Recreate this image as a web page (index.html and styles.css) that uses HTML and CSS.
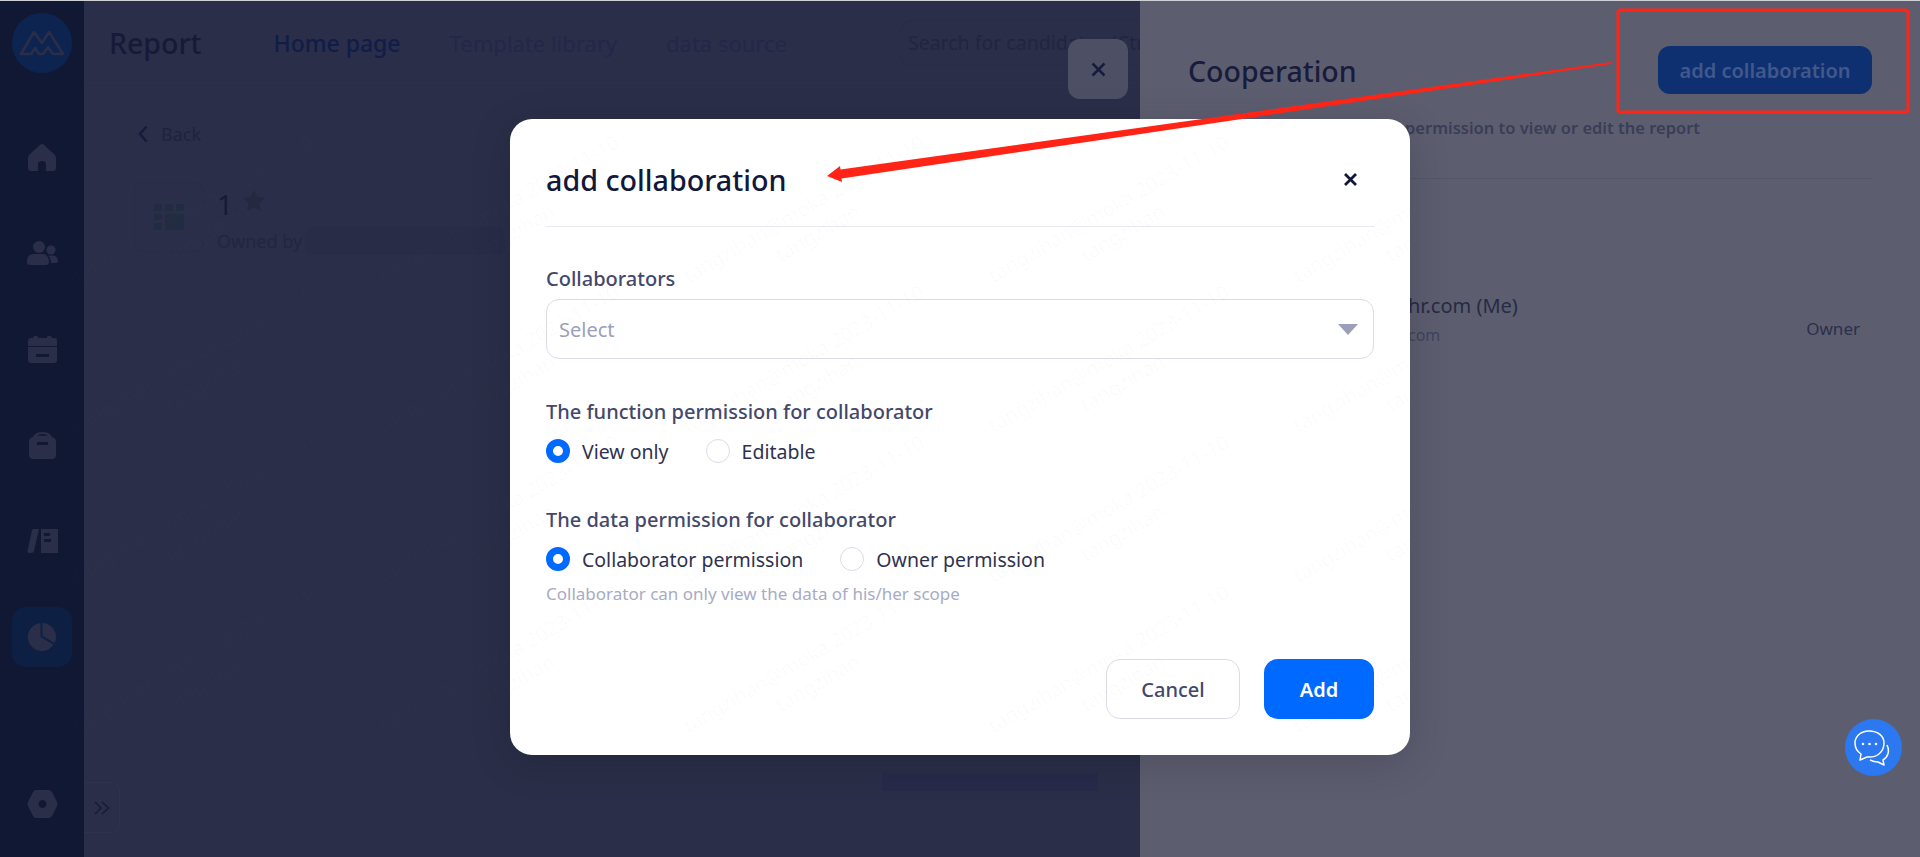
FILE: index.html
```html
<!DOCTYPE html>
<html lang="en">

<head>
    <meta charset="UTF-8">
    <title>Report - Cooperation</title>

    <link rel="stylesheet" href="styles.css">
</head>

<body>
<div class="app">
    <nav class="nav">
        <div class="nav-logo">
            <svg width="46" height="28" viewBox="0 0 46 28" fill="none" stroke="#2a2e49" stroke-width="2.500" stroke-linejoin="round">
                <path d="M2 25 L15 3 L23 14 L30 3 L44 25 H34 L29 18 L24 25 H20 L16 19 L12 25 Z"/>
            </svg>
        </div>
        <a class="nav-item">
            <svg width="28" height="27" viewBox="0 0 28 27"><path d="M14 0 Q15 0 16 1 L26 10 Q28 12 28 14 V24 Q28 27 25 27 H18 V21 Q18 17 14 17 Q10 17 10 21 V27 H3 Q0 27 0 24 V14 Q0 12 2 10 L12 1 Q13 0 14 0 Z"/></svg>
        </a>
        <a class="nav-item">
            <svg width="31" height="24" viewBox="0 0 31 24"><circle cx="12" cy="6" r="6"/><path d="M0 20 Q0 13 7 13 H16 Q21 13 22 20 V21 Q22 24 19 24 H3 Q0 24 0 21 Z"/><circle cx="24" cy="9" r="4.5"/><path d="M21 14.500 H26 Q31 15 31 20 Q31 22 29 22 H24 Q24 17 21 14.500 Z"/></svg>
        </a>
        <a class="nav-item">
            <svg width="29" height="27" viewBox="0 0 29 27"><path d="M7 0 a2 2 0 0 1 3 2 H19 a2 2 0 0 1 3-2 a2 2 0 0 1 2 2 H26 Q29 2 29 5 V10 H0 V5 Q0 2 3 2 H5 a2 2 0 0 1 2-2 Z"/><path fill-rule="evenodd" d="M0 11 H29 V24 Q29 27 26 27 H3 Q0 27 0 24 Z M8 18 V21 H21 V18 Z"/></svg>
        </a>
        <a class="nav-item">
            <svg width="27" height="27" viewBox="0 0 27 27"><path fill-rule="evenodd" d="M4 5 Q6 0 13.500 0 Q21 0 23 5 Q27 6 27 10 V23 Q27 27 23 27 H4 Q0 27 0 23 V10 Q0 6 4 5 Z M8 3.800 Q10 2 13.500 2 Q17 2 19 3.800 Z M8 10 V13 H19 V10 Z"/></svg>
        </a>
        <a class="nav-item">
            <svg width="31" height="24" viewBox="0 0 31 24"><path d="M5 1 Q5.500 0 7 0 H12 L7 22 Q6.500 24 4 24 H2 Q0 24 0.500 22 Z"/><path fill-rule="evenodd" d="M14 0 H31 V24 H14 Z M17 4 V7 H23 V4 Z M17 10 V13 H24 V10 Z"/></svg>
        </a>
        <a class="nav-item nav-item-active">
            <svg width="28" height="28" viewBox="0 0 28 28"><path d="M12.500 0.100 A14 14 0 1 0 25.500 21.800 L12.500 13.800 Z"/><path d="M14.500 0.100 A14 14 0 0 1 28 14 Q28 17 26.600 20 L14.500 12.800 Z"/></svg>
        </a>
        <a class="nav-item nav-item-settings">
            <svg width="31" height="28" viewBox="0 0 31 28"><path fill-rule="evenodd" d="M9 0 H22 Q24 0 25 2 L30 12 Q31 14 30 16 L25 26 Q24 28 22 28 H9 Q7 28 6 26 L1 16 Q0 14 1 12 L6 2 Q7 0 9 0 Z M15.500 10 a4 4 0 1 0 0.010 0 Z"/></svg>
        </a>
    </nav>

    <main class="main">
        <header class="main-header">
            <h1 class="main-title">Report</h1>
            <span class="main-sep"></span>
            <a class="tab tab-active">Home page</a>
            <a class="tab">Template library</a>
            <a class="tab">data source</a>
            <div class="search">Search for candidates (Ctrl+K)</div>
        </header>
        <div class="main-body">
            <a class="back">
                <svg width="10" height="18" viewBox="0 0 10 18" fill="none" stroke="#161b3c" stroke-width="2.500"><path d="M8.500 1.500 L2 9 L8.500 16.500"/></svg>
                Back
            </a>
            <div class="report-row">
                <div class="report-thumb">
                    <svg width="30" height="26" viewBox="0 0 30 26" fill="#212c40">
                        <rect x="0" y="0" width="8" height="7"/><rect x="11" y="0" width="8" height="7" rx="1"/><rect x="22" y="0" width="8" height="7" rx="1"/>
                        <rect x="0" y="10" width="8" height="6" rx="1"/><rect x="11" y="10" width="19" height="16"/><rect x="0" y="19" width="8" height="7" rx="1"/>
                    </svg>
                </div>
                <div class="report-info">
                    <div class="report-name">
                        1
                        <svg class="report-star" width="22" height="21" viewBox="0 0 22 21" fill="#252940"><path d="M11 0 L14.400 6.800 L22 8 L16.500 13.300 L17.800 21 L11 17.400 L4.200 21 L5.500 13.300 L0 8 L7.600 6.800 Z"/></svg>
                    </div>
                    <div class="report-owner">Owned by <span class="redacted"></span></div>
                </div>
            </div>
        </div>
        <div class="main-footer"><span class="redacted-bar"></span></div>
        <a class="collapse">
            <svg width="16" height="14" viewBox="0 0 16 14" fill="none" stroke="#161b3c" stroke-width="1.500"><path d="M1 1 L7 7 L1 13 M8 1 L14.500 7 L8 13"/></svg>
        </a>
    </main>

    <aside class="panel">
        <a class="panel-close">
            <svg width="15" height="15" viewBox="0 0 15 15" fill="none" stroke="#181c3c" stroke-width="2.500"><path d="M1.500 1.500 L13.500 13.500 M13.500 1.500 L1.500 13.500"/></svg>
        </a>
        <div class="panel-head">
            <h2 class="panel-title">Cooperation</h2>
            <a class="panel-add">add collaboration</a>
        </div>
        <p class="panel-desc">permission to view or edit the report</p>
        <div class="member">
            <div class="member-info">
                <div class="member-name">hr.com (Me)</div>
                <div class="member-mail">com</div>
            </div>
            <div class="member-role">Owner</div>
        </div>
    </aside>
</div>

<a class="chat">
    <svg width="42" height="40" viewBox="0 0 42 40" fill="none" stroke="#fff" stroke-width="1.500" stroke-linejoin="round">
        <path d="M16 3 C7 3 2 9 2 15 C2 20 5 24 8 26 L7 32 L14 29 C24 30 31 24 31 15 C31 8 25 3 16 3 Z"/>
        <path d="M34 17 C37 23 35 29 30 32 L31 37 L25 34 C22 34 19 33 17 32"/>
        <circle cx="10" cy="16" r="1.300" fill="#fff" stroke="none"/><circle cx="16.500" cy="16" r="1.300" fill="#fff" stroke="none"/><circle cx="23" cy="16" r="1.300" fill="#fff" stroke="none"/>
    </svg>
</a>

<div class="overlay">
    <div class="modal">
        <div class="modal-head">
            <h3 class="modal-title">add collaboration</h3>
            <a class="modal-close">
                <svg width="15" height="15" viewBox="0 0 15 15" fill="none" stroke="#12183a" stroke-width="2.800"><path d="M2 2 L13 13 M13 2 L2 13"/></svg>
            </a>
        </div>

        <div class="field field-first">
            <label class="field-label">Collaborators</label>
            <div class="select">
                <span>Select</span>
                <span class="select-caret"></span>
            </div>
        </div>

        <div class="field field-second">
            <label class="field-label">The function permission for collaborator</label>
            <div class="radios">
                <span class="radio radio-on"></span><span class="radio-text">View only</span>
                <span class="radio"></span><span class="radio-text">Editable</span>
            </div>
        </div>

        <div class="field">
            <label class="field-label">The data permission for collaborator</label>
            <div class="radios">
                <span class="radio radio-on"></span><span class="radio-text">Collaborator permission</span>
                <span class="radio"></span><span class="radio-text">Owner permission</span>
            </div>
            <div class="field-hint">Collaborator can only view the data of his/her scope</div>
        </div>

        <div class="modal-foot">
            <button class="btn">Cancel</button>
            <button class="btn btn-primary">Add</button>
        </div>
    </div>
</div>

<svg class="markup" width="1920" height="857" viewBox="0 0 1920 857">
    <rect x="1618" y="10" width="290" height="102" rx="2" fill="none" stroke="#ff2415" stroke-width="3"/>
    <path d="M827 176 L840 166 L840.500 169.500 L1611 62 L1611 64 L841.500 178.500 L842 182 Z" fill="#ff2415"/>
</svg>

<div id="watermark" class="watermark"></div>

<script src="watermark.js"></script>
</body>

</html>
```

FILE: styles.css
```css
* {
    box-sizing: border-box;
}

body {
    margin: 0;
    height: 857px;
    overflow: hidden;
    position: relative;
    font-family: "Noto Sans", "Open Sans", sans-serif;
    background-color: #2a2e48;
}

h1, h2, h3, p {
    margin: 0;
    font-weight: 500;
}

.app {
    display: flex;
    height: 857px;
    border-top: 1px solid #cfd0d6;
}

/* left bar */
.nav {
    width: 84px;
    flex-shrink: 0;
    display: flex;
    flex-direction: column;
    align-items: center;
    gap: 36px;
    padding: 12px 0 23px;
    background-color: #111834;
}

.nav svg {
    fill: #2a2e49;
}

.nav-logo {
    width: 60px;
    height: 60px;
    margin-bottom: 18px;
    border-radius: 50%;
    background-color: #0e2450;
    display: flex;
    align-items: center;
    justify-content: center;
}

.nav-logo svg {
    fill: none;
}

.nav-item {
    width: 60px;
    height: 60px;
    flex-shrink: 0;
    border-radius: 14px;
    display: flex;
    align-items: center;
    justify-content: center;
}

.nav-item-active {
    background-color: #0e1f44;
}

.nav-item-settings {
    margin-top: auto;
}

/* page behind the dialog */
.main {
    flex: 1;
    min-width: 0;
    position: relative;
    overflow: hidden;
    display: flex;
    flex-direction: column;
}

.main-header {
    height: 85px;
    flex-shrink: 0;
    display: flex;
    align-items: center;
    padding-left: 25px;
    border-bottom: 1px solid #282c46;
}

.main-title {
    font-size: 28.500px;
    line-height: 40px;
    color: #161a38;
}

.main-sep {
    width: 1px;
    height: 20px;
    margin: 0 48px 0 24px;
    background-color: #30344e;
}

.tab {
    font-size: 22px;
    margin-right: 49px;
    color: #23274a;
    white-space: nowrap;
}

.tab-active {
    font-size: 23px;
    color: #0f1d48;
    font-weight: 500;
}

.search {
    height: 46px;
    width: 300px;
    flex-shrink: 0;
    margin-left: 64px;
    padding: 0 7px;
    border: 1px solid #282c46;
    border-radius: 12px;
    font-size: 19.500px;
    line-height: 44px;
    white-space: nowrap;
    color: #212542;
}

.main-body {
    flex: 1;
    padding: 33px 50px 0;
}

.back {
    display: flex;
    align-items: center;
    gap: 13px;
    height: 30px;
    padding-left: 4px;
    font-size: 18px;
    color: #1f2340;
}

.report-row {
    display: flex;
    gap: 13px;
    margin-top: 33px;
}

.report-thumb {
    width: 70px;
    height: 70px;
    border: 1px solid #282c46;
    border-radius: 10px;
    display: flex;
    align-items: center;
    justify-content: center;
}

.report-name {
    display: flex;
    align-items: center;
    gap: 10px;
    height: 44px;
    font-size: 28px;
    color: #161a38;
}

.report-star {
    margin-bottom: 8px;
}

.report-owner {
    display: flex;
    align-items: center;
    gap: 3px;
    font-size: 18px;
    height: 30px;
    color: #22263f;
}

.redacted {
    width: 200px;
    height: 28px;
    border-radius: 8px;
    background-color: #282c47;
}

.main-footer {
    height: 84px;
    flex-shrink: 0;
    padding: 0 0 0 798px;
}

.redacted-bar {
    display: block;
    width: 216px;
    height: 18px;
    background-color: #272b4a;
}

.collapse {
    position: absolute;
    left: 0;
    top: 781px;
    width: 36px;
    height: 51px;
    border: 1px solid #2e3250;
    border-left: none;
    border-radius: 0 8px 8px 0;
    display: flex;
    align-items: center;
    justify-content: center;
}

/* side panel */
.panel {
    width: 780px;
    flex-shrink: 0;
    position: relative;
    padding: 45px 48px 0 48px;
    background-color: #5c5e70;
}

.panel-close {
    position: absolute;
    left: -72px;
    top: 38px;
    width: 60px;
    height: 60px;
    border-radius: 12px;
    background-color: #4d5065;
    display: flex;
    align-items: center;
    justify-content: center;
}

.panel-head {
    display: flex;
    align-items: center;
    justify-content: space-between;
}

.panel-title {
    font-size: 28.500px;
    margin-top: 2px;
    color: #181c3c;
}

.panel-add {
    width: 214px;
    height: 48px;
    border-radius: 12px;
    background-color: #0f3070;
    color: #41588c;
    font-size: 20px;
    font-weight: 600;
    line-height: 50px;
    text-align: center;
}

.panel-desc {
    margin-top: 20px;
    padding: 0 0 36px 217px;
    border-bottom: 1px solid #53556a;
    font-size: 16.500px;
    line-height: 28px;
    font-weight: 600;
    color: #3a3d56;
}

.member {
    display: flex;
    align-items: center;
    justify-content: space-between;
    margin-top: 114px;
    padding: 0 12px 0 220px;
}

.member-name {
    font-size: 20px;
    line-height: 26px;
    color: #272a45;
}

.member-mail {
    font-size: 16px;
    line-height: 26px;
    margin-top: 3px;
    color: #40435c;
}

.member-role {
    font-size: 17px;
    margin-top: 16px;
    color: #2c2f4c;
}

.chat {
    position: absolute;
    left: 1845px;
    top: 719px;
    width: 57px;
    height: 57px;
    border-radius: 50%;
    background-color: #2b78f0;
    display: flex;
    align-items: center;
    justify-content: center;
}

/* dialog */
.overlay {
    position: absolute;
    top: 0;
    left: 0;
    right: 0;
    bottom: 0;
    display: flex;
    justify-content: center;
    align-items: flex-start;
    padding-top: 119px;
}

.modal {
    width: 900px;
    height: 636px;
    padding: 0 36px 36px;
    border-radius: 22px;
    background-color: #fff;
    box-shadow: 0 8px 40px rgba(0, 0, 0, 0.16);
    display: flex;
    flex-direction: column;
}

.modal-head {
    height: 108px;
    flex-shrink: 0;
    display: flex;
    align-items: center;
    justify-content: space-between;
    padding: 14px 16px 0 0;
    border-bottom: 1px solid #e8e8f2;
}

.modal-title {
    font-size: 28.700px;
    font-weight: 500;
    color: #12183a;
}

.modal-close {
    display: flex;
}

.field {
    margin-top: 43px;
}

.field-first {
    margin-top: 39px;
}

.field-second {
    margin-top: 40px;
}

.field-label {
    display: block;
    font-size: 20px;
    line-height: 26px;
    font-weight: 500;
    color: #44486a;
}

.select {
    height: 60px;
    margin-top: 7px;
    padding: 0 12px;
    border: 1px solid #dcdce8;
    border-radius: 13px;
    display: flex;
    align-items: center;
    justify-content: space-between;
    font-size: 20px;
    color: #9b9fbb;
}

.select-caret {
    width: 0;
    height: 0;
    border-left: 10px solid transparent;
    border-right: 10px solid transparent;
    border-top: 11px solid #9b9fbb;
    margin-right: 3px;
}

.radios {
    display: flex;
    align-items: center;
    height: 26px;
    margin-top: 13px;
}

.radio {
    width: 24px;
    height: 24px;
    flex-shrink: 0;
    border: 1px solid #dcdce8;
    border-radius: 50%;
}

.radio-on {
    border: 7px solid #0069ff;
}

.radio-text {
    margin: 0 37px 0 12px;
    font-size: 19.500px;
    color: #2e3250;
}

.field-hint {
    margin-top: 11px;
    font-size: 17px;
    line-height: 22px;
    color: #a8abc4;
}

.modal-foot {
    margin-top: auto;
    display: flex;
    justify-content: flex-end;
    gap: 24px;
}

.btn {
    height: 60px;
    width: 134px;
    border: 1px solid #dcdce8;
    border-radius: 14px;
    background-color: #fff;
    font-family: inherit;
    font-size: 20px;
    font-weight: 500;
    color: #44486a;
}

.btn-primary {
    width: 110px;
    border: none;
    background-color: #0069ff;
    color: #fff;
    font-weight: 600;
}

/* red markup drawn on the screenshot */
.markup {
    position: absolute;
    top: 0;
    left: 0;
    pointer-events: none;
}

/* diagonal name stamp over the page */
.watermark {
    position: absolute;
    left: 48px;
    top: 146px;
    display: grid;
    grid-template-columns: repeat(6, 305px);
    grid-auto-rows: 150px;
    pointer-events: none;
}

.watermark-tile {
    display: flex;
    flex-direction: column;
    align-items: center;
    justify-content: center;
    transform: rotate(-30deg);
    font-size: 20px;
    line-height: 28px;
    white-space: nowrap;
    color: rgba(110, 110, 130, 0.03);
}
```

FILE: watermark.js
```js
// Fill the page with the diagonal name stamp
const watermark = document.getElementById('watermark');
for (let i = 0; i < 24; i++) {
    const tile = document.createElement('div');
    tile.classList.add('watermark-tile');

    const first = document.createElement('span');
    first.textContent = 'tangzihan@moka 2023-11-10';

    const second = document.createElement('span');
    second.textContent = 'tangzihan';

    tile.appendChild(first);
    tile.appendChild(second);
    watermark.appendChild(tile);
}
```
